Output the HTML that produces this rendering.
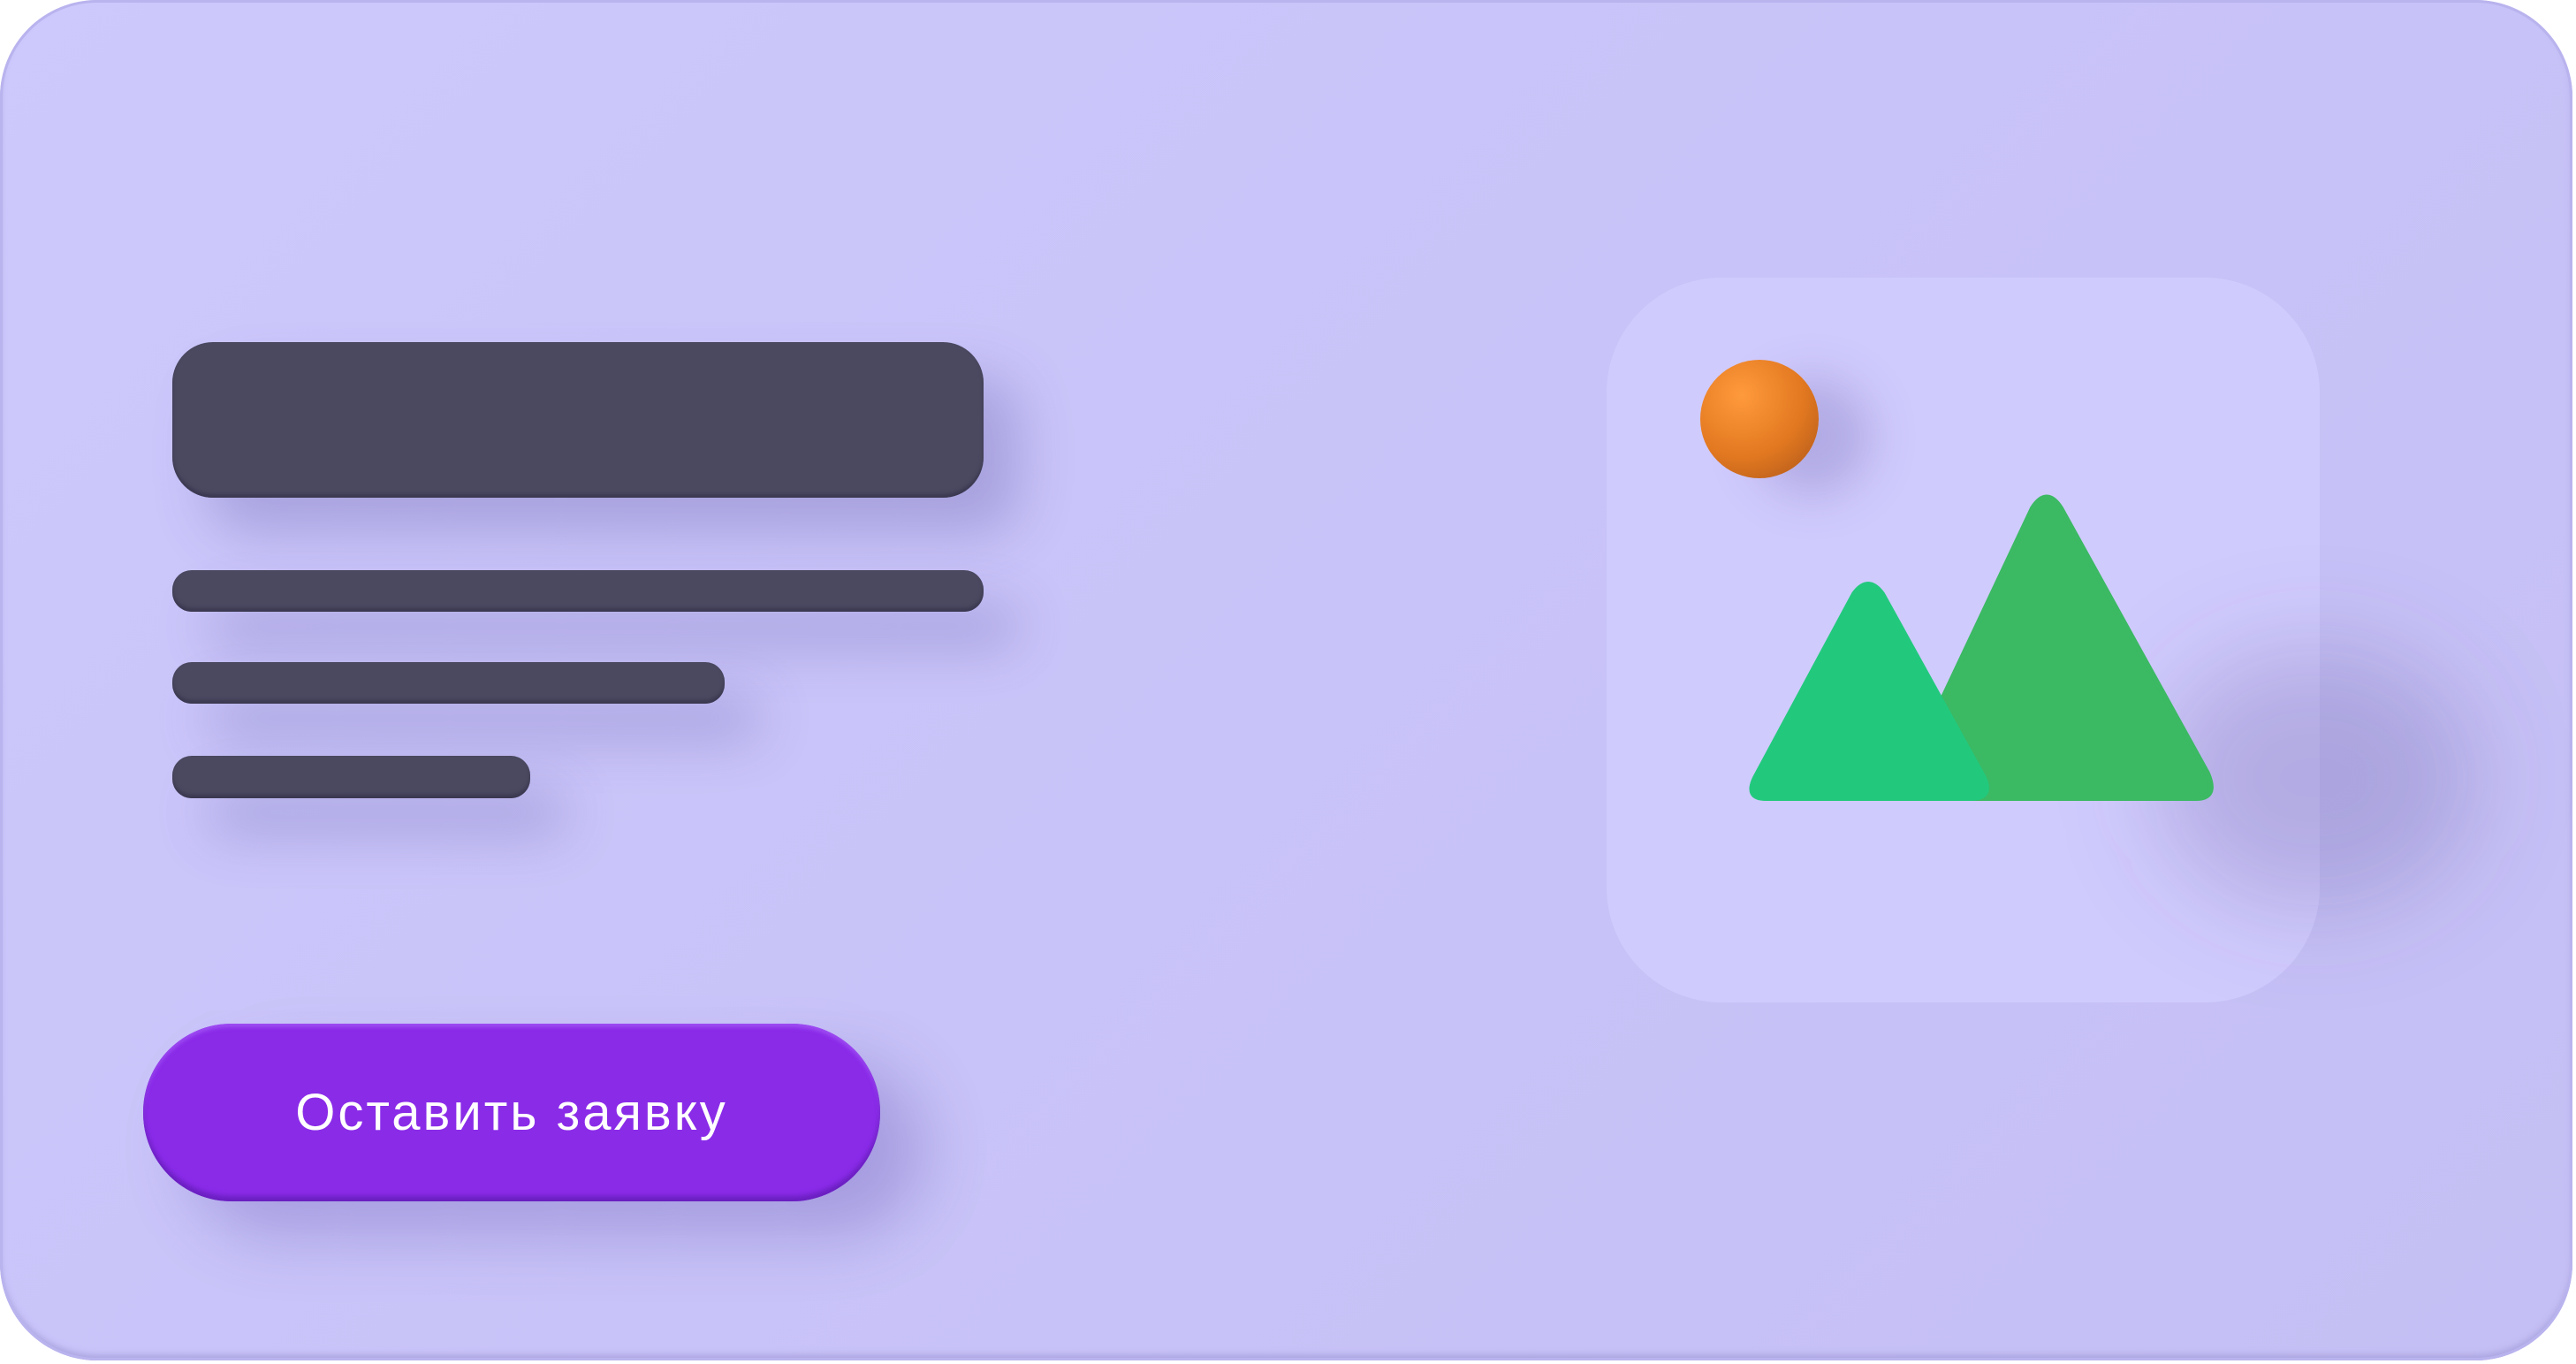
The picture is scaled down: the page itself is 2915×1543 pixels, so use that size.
<!DOCTYPE html>
<html><head><meta charset="utf-8"><style>
html,body{margin:0;padding:0;width:2915px;height:1543px;overflow:hidden;background:#fff}
.card{position:absolute;left:0;top:0;width:2911px;height:1539px;border-radius:110px;background:linear-gradient(135deg,#cdc9fc 0%,#c8c3f8 50%,#c4bff4 100%);box-shadow:inset 0 0 0 3px #b9b3ee, inset 0 -6px 8px #a9a2de}
.d{position:absolute;background:#4b4960;box-shadow:inset 0 -4px 4px #3a3850, 40px 40px 60px rgba(90,80,160,.3)}
.btn{position:absolute;left:162px;top:1158px;width:834px;height:201px;border-radius:100px;background:#8a2be8;box-shadow:inset 0 -6px 6px #6a1fc0,inset 0 4px 4px #9e4cf2,50px 40px 70px rgba(90,70,170,.3);color:#fff;font-family:"Liberation Sans","DejaVu Sans",sans-serif;font-size:58px;display:flex;align-items:center;justify-content:center;letter-spacing:3px}
.panel{position:absolute;left:1818px;top:314px;width:807px;height:820px;border-radius:130px;background:#d0cbfd}
.ball{position:absolute;left:1924px;top:407px;width:134px;height:134px;border-radius:50%;background:radial-gradient(circle at 35% 30%,#ff9a3c,#e27820 55%,#a8541a);box-shadow:60px 20px 50px rgba(90,80,160,.25)}
</style></head><body>
<div class="card"></div>
<div class="d" style="left:195px;top:387px;width:918px;height:176px;border-radius:46px"></div>
<div class="d" style="left:195px;top:645px;width:918px;height:47px;border-radius:22px"></div>
<div class="d" style="left:195px;top:749px;width:625px;height:47px;border-radius:22px"></div>
<div class="d" style="left:195px;top:855px;width:405px;height:48px;border-radius:22px"></div>
<div class="btn">Оставить заявку</div>
<div class="panel"></div>
<div class="ball"></div>
<svg style="position:absolute;left:0;top:0" width="2915" height="1543">
<defs><filter id="f" x="-50%" y="-50%" width="200%" height="200%"><feGaussianBlur stdDeviation="55"/></filter></defs>
<ellipse cx="2620" cy="880" rx="180" ry="150" fill="rgba(90,80,150,.25)" filter="url(#f)"/>
<path d="M2300 575 Q2316 550 2332 575 L2498 875 Q2510 903 2485 903 L2170 903 L2156 880 Z" fill="#3bb963" stroke="#3bb963" stroke-width="6" stroke-linejoin="round"/>
<path d="M2098 672 Q2114 650 2130 672 L2245 880 Q2255 903 2230 903 L1998 903 Q1975 903 1986 880 Z" fill="#22c97d" stroke="#22c97d" stroke-width="6" stroke-linejoin="round"/>
</svg>
</body></html>
